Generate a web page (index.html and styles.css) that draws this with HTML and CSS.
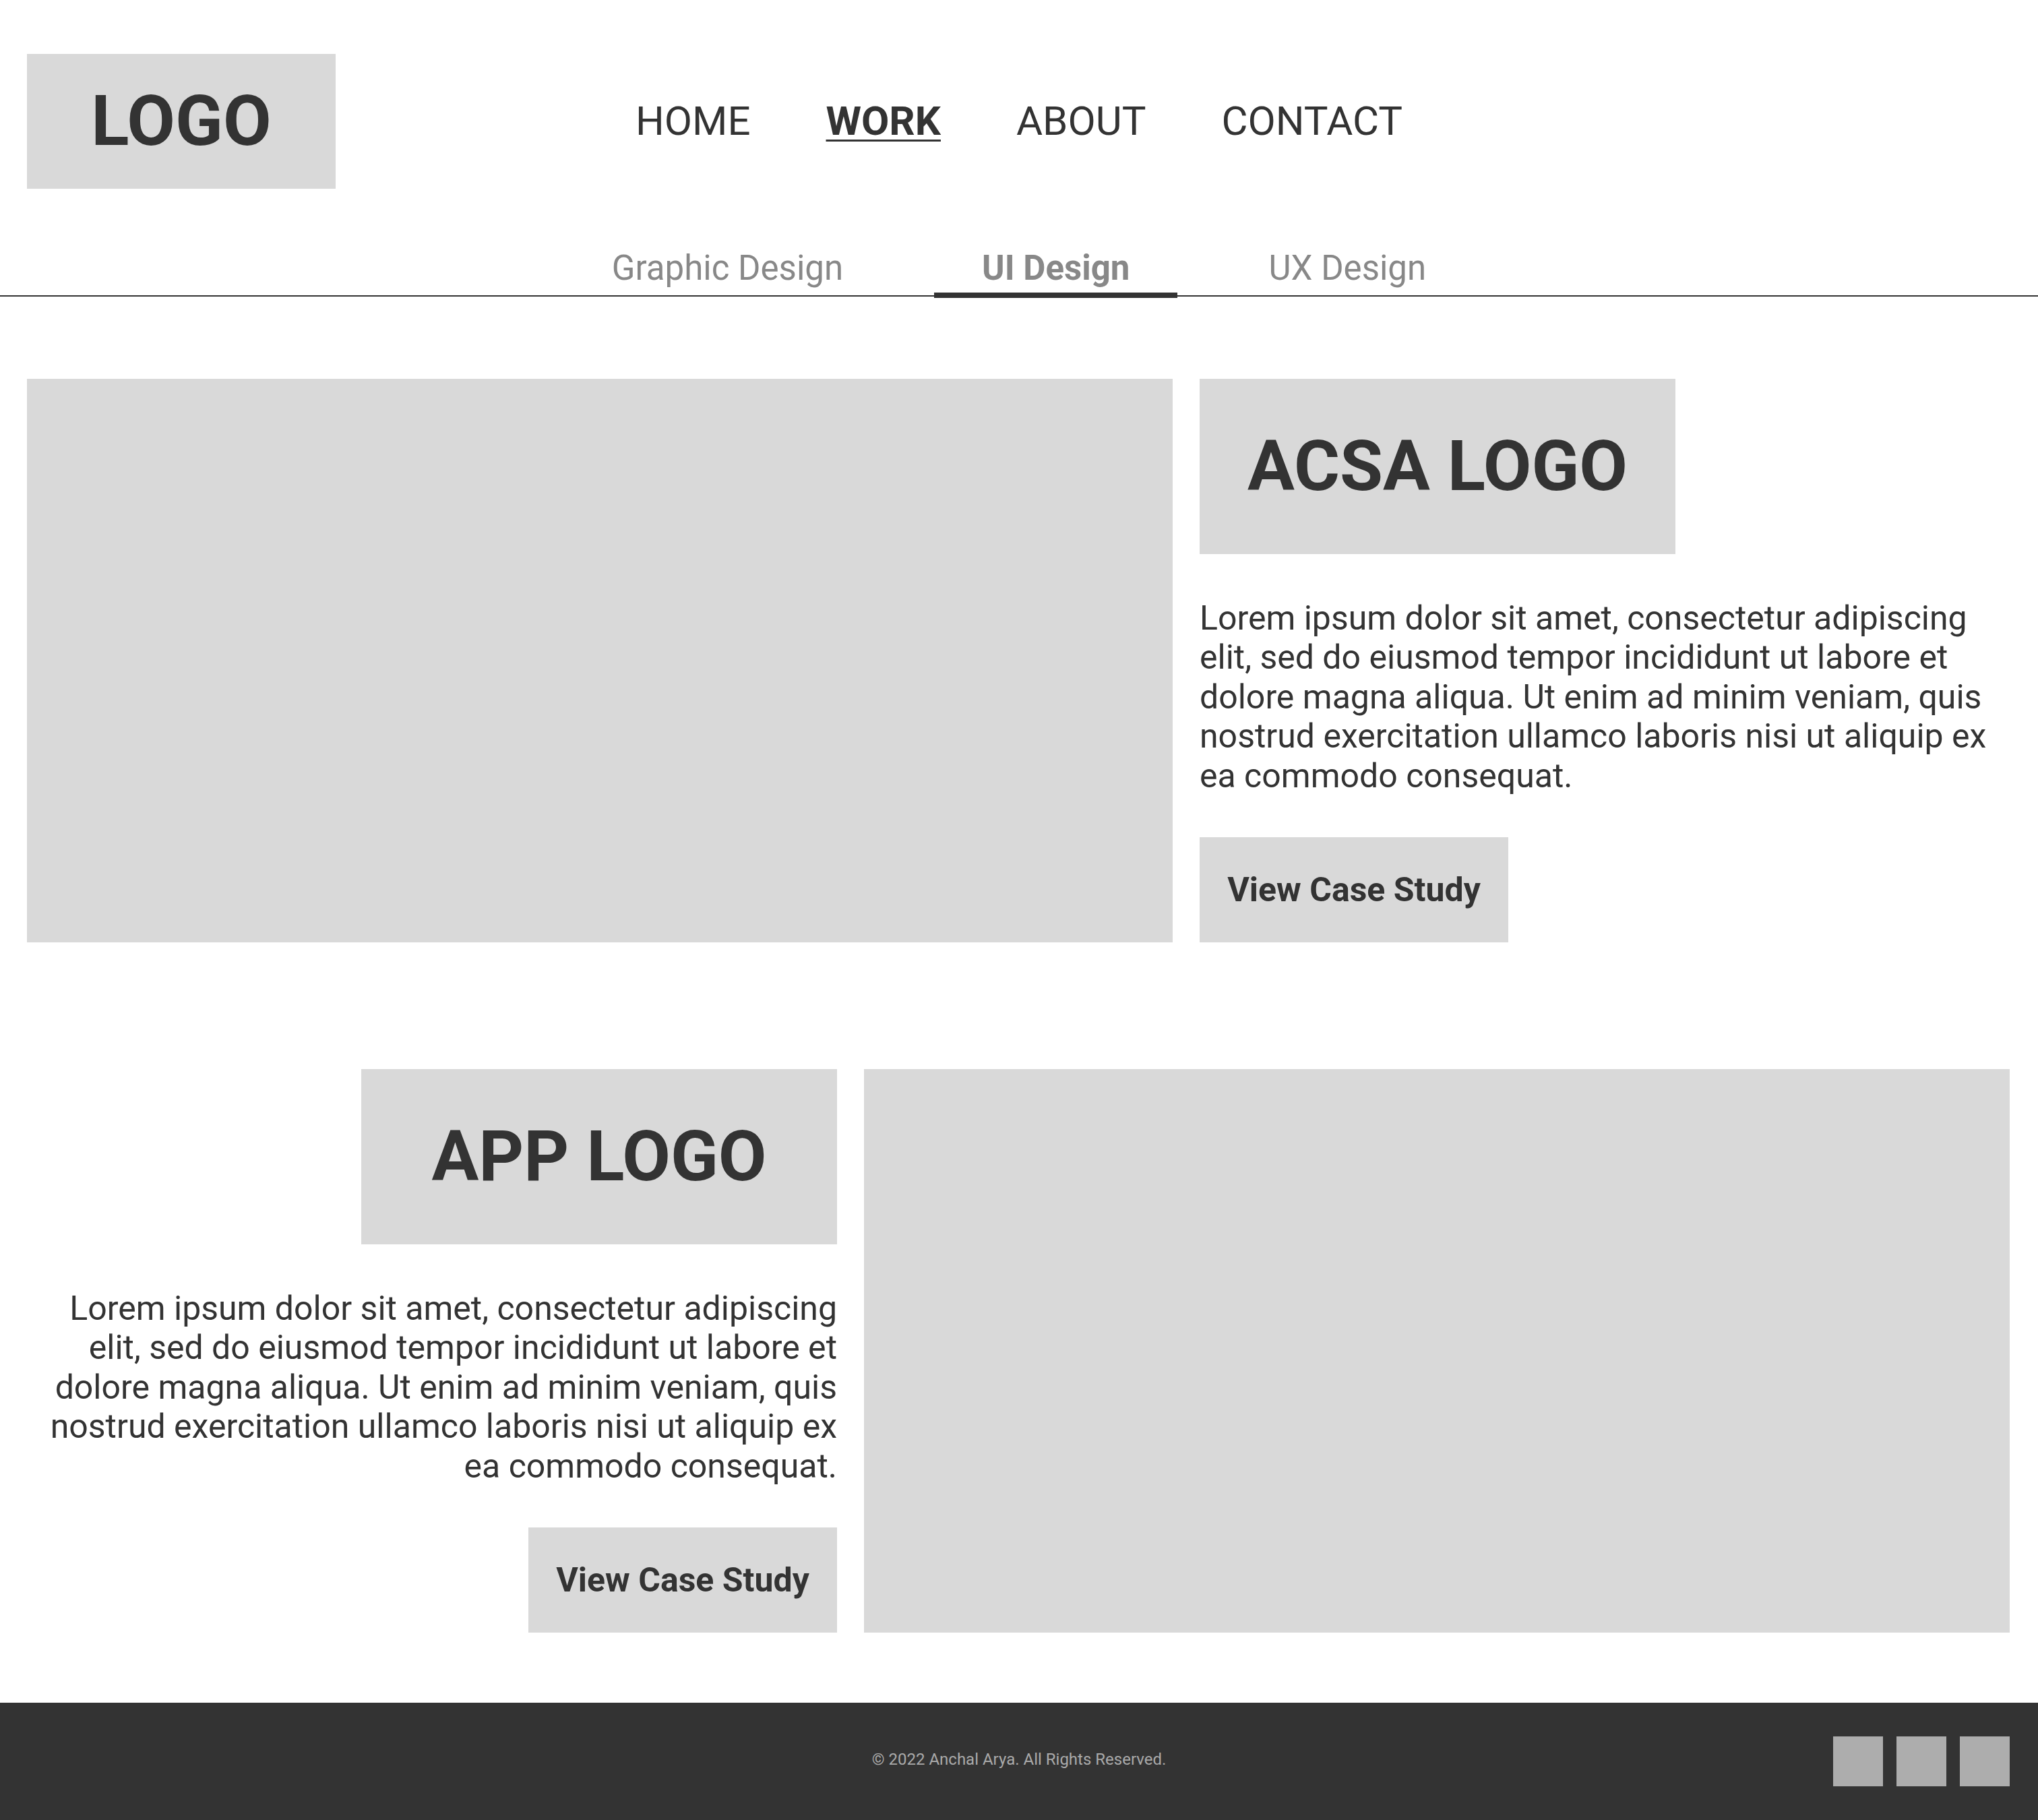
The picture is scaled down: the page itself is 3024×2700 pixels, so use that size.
FILE: index.html
```html
<!DOCTYPE html>
<html lang="en">
<head>
<meta charset="utf-8">
<title>Work - UI Design</title>
<link rel="stylesheet" href="styles.css">
</head>
<body>
<header class="header">
  <div class="logo-box"><span class="logo-text">LOGO</span></div>
  <nav class="main-nav">
    <a class="nav-link">HOME</a>
    <a class="nav-link nav-link-active">WORK</a>
    <a class="nav-link">ABOUT</a>
    <a class="nav-link">CONTACT</a>
  </nav>
  <div class="header-spacer"></div>
</header>

<div class="tabs">
  <a class="tab">Graphic Design</a>
  <a class="tab tab-active">UI Design</a>
  <a class="tab">UX Design</a>
</div>

<main class="projects">
  <section class="project project-left">
    <div class="project-image"></div>
    <div class="project-info">
      <div class="project-logo"><span class="project-logo-text">ACSA LOGO</span></div>
      <p class="project-desc">Lorem ipsum dolor sit amet, consectetur adipiscing elit, sed do eiusmod tempor incididunt ut labore et dolore magna aliqua. Ut enim ad minim veniam, quis nostrud exercitation ullamco laboris nisi ut aliquip ex ea commodo consequat.</p>
      <a class="case-btn">View Case Study</a>
    </div>
  </section>

  <section class="project project-right">
    <div class="project-info project-info-right">
      <div class="project-logo"><span class="project-logo-text">APP LOGO</span></div>
      <p class="project-desc">Lorem ipsum dolor sit amet, consectetur adipiscing elit, sed do eiusmod tempor incididunt ut labore et dolore magna aliqua. Ut enim ad minim veniam, quis nostrud exercitation ullamco laboris nisi ut aliquip ex ea commodo consequat.</p>
      <a class="case-btn">View Case Study</a>
    </div>
    <div class="project-image"></div>
  </section>
</main>

<footer class="footer">
  <div class="footer-spacer"></div>
  <p class="footer-text">© 2022 Anchal Arya. All Rights Reserved.</p>
  <div class="socials">
    <span class="social"></span>
    <span class="social"></span>
    <span class="social"></span>
  </div>
</footer>
</body>
</html>
```

FILE: styles.css
```css
* { box-sizing: border-box; }

html, body {
  margin: 0;
  padding: 0;
  background: #ffffff;
}

body {
  width: 3024px;
  font-family: Roboto, "Liberation Sans", Arial, sans-serif;
  color: #333333;
}

a { color: inherit; text-decoration: none; }

/* Header */
.header {
  display: grid;
  grid-template-columns: 1fr auto 1fr;
  align-items: center;
  padding: 80px 40px 0 40px;
}

.logo-box {
  width: 458px;
  height: 200px;
  background: #d9d9d9;
  display: flex;
  align-items: center;
  justify-content: center;
}

.logo-text {
  font-size: 104px;
  font-weight: 700;
  line-height: 1;
  color: #333333;
}

.main-nav {
  display: flex;
  gap: 112px;
  align-items: center;
}

.nav-link {
  font-size: 60px;
  font-weight: 400;
  line-height: 1;
  color: #333333;
}

.nav-link-active {
  font-weight: 700;
  text-decoration: underline;
  text-decoration-thickness: 3px;
  text-underline-offset: 7px;
}

/* Tabs */
.tabs {
  margin-top: 88px;
  display: flex;
  justify-content: center;
  align-items: flex-end;
  gap: 64px;
  border-bottom: 2px solid #333333;
}

.tab {
  font-size: 51px;
  line-height: 60px;
  color: #888888;
  padding: 0 71px 6px 71px;
  border-bottom: 8px solid transparent;
  margin-bottom: -4px;
}

.tab-active {
  font-weight: 700;
  border-bottom-color: #333333;
}

/* Projects */
.projects {
  padding: 122px 42px 0 40px;
  display: flex;
  flex-direction: column;
  gap: 188px;
}

.project {
  display: grid;
  gap: 40px;
}

.project-left { grid-template-columns: 1700px 1fr; }
.project-right { grid-template-columns: 1fr 1700px; }

.project-image {
  height: 836px;
  background: #d9d9d9;
}

.project-info {
  display: flex;
  flex-direction: column;
  align-items: flex-start;
}

.project-info-right {
  align-items: flex-end;
  text-align: right;
}

.project-logo {
  width: 706px;
  height: 260px;
  background: #d9d9d9;
  display: flex;
  align-items: center;
  justify-content: center;
}

.project-logo-text {
  font-size: 104px;
  font-weight: 700;
  line-height: 1;
  color: #333333;
}

.project-desc {
  margin: 66px 0 0 0;
  font-size: 50px;
  line-height: 58.4px;
  color: #333333;
}

.case-btn {
  margin-top: 62px;
  width: 458px;
  height: 156px;
  background: #d9d9d9;
  display: flex;
  align-items: center;
  justify-content: center;
  font-size: 50px;
  font-weight: 700;
  color: #333333;
}

/* Footer */
.footer {
  margin-top: 104px;
  height: 174px;
  background: #333333;
  display: grid;
  grid-template-columns: 1fr auto 1fr;
  align-items: center;
  padding: 0 42px;
}

.footer-text {
  margin: 0 0 6px 0;
  font-size: 24px;
  color: #aaaaaa;
}

.socials {
  justify-self: end;
  display: flex;
  gap: 20px;
}

.social {
  width: 74px;
  height: 74px;
  background: #adadad;
}
```
